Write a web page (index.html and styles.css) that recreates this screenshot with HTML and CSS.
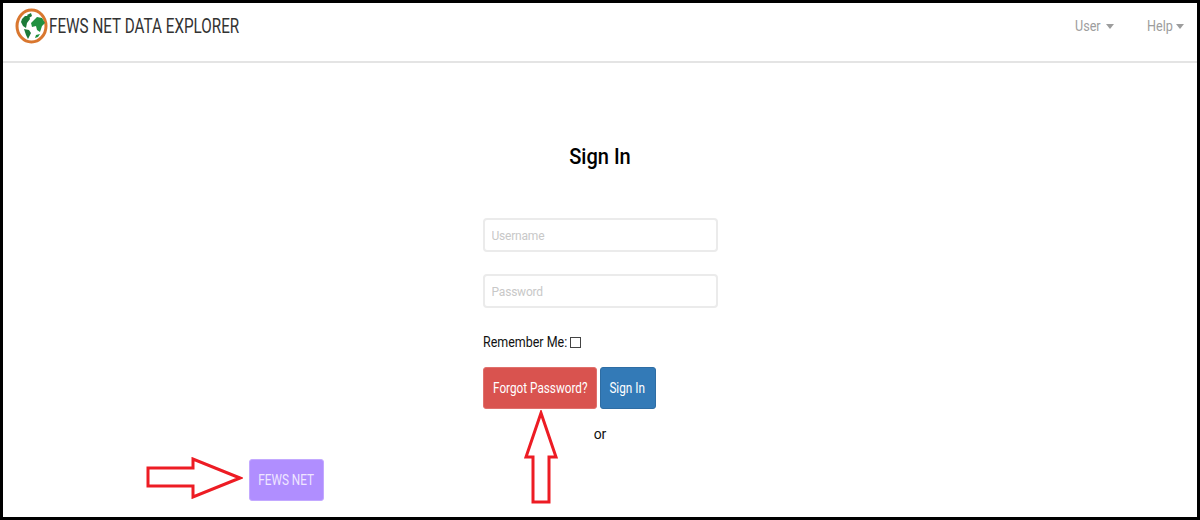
FILE: index.html
```html
<!DOCTYPE html>
<html>
<head>
    <title>FEWS NET Data Explorer</title>
    <link rel="stylesheet" href="styles.css">
</head>
<body>
    <div class="frame">
        <div class="navbar">
            <div class="brand">
                <svg class="logo" width="33" height="36" viewBox="0 0 33 36">
                    <ellipse cx="16.5" cy="18" rx="14.5" ry="16" fill="#fff" stroke="#d9772f" stroke-width="3"/>
                    <path d="M7 11l3-3 4 0 1 3-3 4-1 5-3-2-2-4zM12 7l4-2 1 3-3 2zM9 21l5 1 2 3-3 6-2-4z" fill="#1c7a38"/>
                    <path d="M16 15l6-6 5 1 3 5-3 3-2 6-3-2-1-4-4 1zM21 27l4-1-2 3-3 1z" fill="#1f9140"/>
                </svg>
                <span class="brand-name">FEWS NET DATA EXPLORER</span>
            </div>
            <div class="nav-links">
                <a class="nav-link"><span class="nav-text">User</span><span class="caret"></span></a>
                <a class="nav-link"><span class="nav-text">Help</span><span class="caret caret-tight"></span></a>
            </div>
        </div>

        <div class="content">
            <h2 class="title">Sign In</h2>
            <form class="signin">
                <input type="text" class="field" placeholder="Username">
                <input type="password" class="field" placeholder="Password">
                <div class="remember">
                    <span class="remember-text">Remember Me:</span>
                    <span class="checkbox"></span>
                </div>
                <div class="buttons">
                    <button type="button" class="btn btn-danger"><span class="btn-text">Forgot Password?</span></button>
                    <button type="button" class="btn btn-primary"><span class="btn-text">Sign In</span></button>
                </div>
            </form>
            <div class="or">or</div>
            <button type="button" class="btn btn-fews"><span class="btn-text">FEWS NET</span></button>

            <!-- red callout arrows -->
            <svg class="arrow arrow-right" width="98" height="42" viewBox="0 0 98 42">
                <path d="M3 11H48V2L95 21L48 40V29H3Z" fill="#fff" stroke="#ed1c24" stroke-width="3"/>
            </svg>
            <svg class="arrow arrow-up" width="34" height="95" viewBox="0 0 34 95">
                <path d="M17 3L32 47H25V92H9V47H2Z" fill="#fff" stroke="#ed1c24" stroke-width="3"/>
            </svg>
        </div>
    </div>
</body>
</html>
```

FILE: styles.css
```css
html, body {
    margin: 0;
    padding: 0;
}
body {
    width: 1200px;
    height: 520px;
    overflow: hidden;
    background: #fff;
    font-family: Roboto, "Liberation Sans", sans-serif;
}
.frame {
    box-sizing: border-box;
    width: 1200px;
    height: 520px;
    border: 3px solid #000;
    background: #fff;
    display: flex;
    flex-direction: column;
}
.navbar {
    height: 58px;
    flex: none;
    display: flex;
    justify-content: space-between;
    border-bottom: 2px solid #e4e4e4;
}
.brand {
    display: flex;
    align-items: flex-start;
    padding-left: 12px;
    padding-top: 5px;
}
.logo {
    display: block;
}
.brand-name {
    font-size: 20px;
    line-height: 36px;
    margin-left: 1px;
    color: #333;
    white-space: nowrap;
    transform: scaleX(0.762);
    transform-origin: left center;
}
.nav-links {
    display: flex;
    gap: 33px;
    padding-right: 13px;
    padding-top: 13px;
}
.nav-link {
    display: flex;
    align-items: center;
    height: 20px;
    font-size: 14px;
    color: #9d9d9d;
}
.nav-text {
    transform: scaleX(0.9);
    transform-origin: left center;
    margin-right: -3px;
}
.caret {
    width: 0;
    height: 0;
    margin-left: 6px;
    border-top: 5px solid #9d9d9d;
    border-left: 4px solid transparent;
    border-right: 4px solid transparent;
}
.caret-tight {
    margin-left: 3px;
}
.content {
    position: relative;
    flex: 1;
}
.title {
    margin: 81px 0 0;
    text-align: center;
    font-size: 22px;
    line-height: 26px;
    font-weight: 500;
    color: #000;
    transform: scaleX(0.91);
}
.signin {
    width: 235px;
    margin: 48px auto 0;
    display: flex;
    flex-direction: column;
}
.field {
    box-sizing: border-box;
    width: 235px;
    height: 34px;
    margin-bottom: 22px;
    padding: 2px 6px 0 7px;
    border: 2px solid #ebebeb;
    border-radius: 4px;
    font-family: inherit;
    font-size: 12px;
    letter-spacing: -0.2px;
}
.field::placeholder {
    color: #c8c8c8;
}
.remember {
    display: flex;
    align-items: center;
    font-size: 14px;
    line-height: 20px;
    color: #111;
    margin-top: 2px;
}
.remember-text {
    transform: scaleX(0.89);
    transform-origin: left center;
    margin-right: -10px;
}
.checkbox {
    box-sizing: border-box;
    width: 11px;
    height: 11px;
    margin-left: 3px;
    border: 1px solid #444;
}
.buttons {
    display: flex;
    gap: 3px;
    margin-top: 15px;
}
.btn {
    height: 42px;
    padding: 0;
    border-radius: 3px;
    font-family: inherit;
    font-size: 14px;
    color: #fff;
    white-space: nowrap;
}
.btn-text {
    display: inline-block;
    transform: scaleX(0.84);
}
.btn-danger {
    width: 114px;
    background: #d9534f;
    border: 1px solid #e0706c;
}
.btn-primary {
    width: 56px;
    background: #337ab7;
    border: 1px solid #2e6da4;
}
.or {
    margin-top: 15px;
    text-align: center;
    font-size: 14px;
    line-height: 20px;
    color: #111;
}
.btn-fews {
    position: absolute;
    left: 246px;
    top: 396px;
    width: 75px;
    background: #b08eff;
    border: 1px solid #c3a9ff;
    color: #efe6ff;
}
.arrow {
    position: absolute;
}
.arrow-right {
    left: 142px;
    top: 394px;
}
.arrow-up {
    left: 521px;
    top: 347px;
}
```
